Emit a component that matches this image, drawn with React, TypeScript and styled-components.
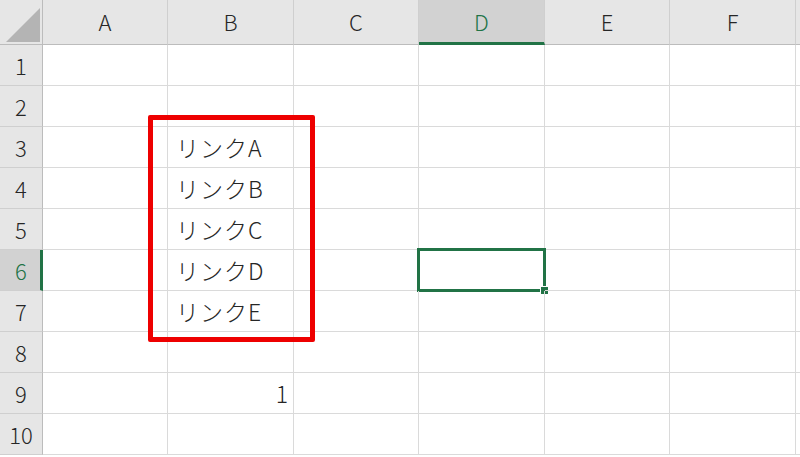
import React from 'react';
import styled, { createGlobalStyle, css } from 'styled-components';

const GlobalStyle = createGlobalStyle`
  html, body {
    margin: 0;
    padding: 0;
    background: #ffffff;
    overflow: hidden;
  }
  body {
    font-family: "Noto Sans CJK JP", "Noto Sans", sans-serif;
  }
`;

const COLS = ['A', 'B', 'C', 'D', 'E', 'F', 'G'];
const COL_WIDTHS = [125, 126, 125, 126, 125, 126, 60];
const ROW_COUNT = 10;
const ACTIVE_COL = 'D';
const ACTIVE_ROW = 6;
const GREEN = '#217346';

const cellValues: Record<string, { text: string; align?: 'left' | 'right' }> = {
  B3: { text: 'リンクA' },
  B4: { text: 'リンクB' },
  B5: { text: 'リンクC' },
  B6: { text: 'リンクD' },
  B7: { text: 'リンクE' },
  B9: { text: '1', align: 'right' },
};

const Sheet = styled.div`
  position: relative;
  display: grid;
  grid-template-columns: 43px ${COL_WIDTHS.map((w) => `${w}px`).join(' ')};
  grid-template-rows: 45px repeat(${ROW_COUNT}, 41px);
  width: 800px;
  height: 457px;
  overflow: hidden;
  color: #262626;
  font-weight: 300;
`;

const Corner = styled.div`
  background: #e6e6e6;
  border-right: 1px solid #bcbcbc;
  border-bottom: 1px solid #bcbcbc;
  box-sizing: border-box;
  display: flex;
  align-items: flex-end;
  justify-content: flex-end;
  padding: 0 2px 2px 0;
`;

const ColHeader = styled.div<{ $active?: boolean }>`
  box-sizing: border-box;
  background: #e6e6e6;
  border-right: 1px solid #cfcfcf;
  border-bottom: 1px solid #bcbcbc;
  display: flex;
  align-items: center;
  justify-content: center;
  font-size: 22px;
  padding-bottom: 2px;
  ${(p) =>
    p.$active &&
    css`
      background: #d2d2d2;
      color: ${GREEN};
      border-bottom: 3px solid ${GREEN};
      padding-bottom: 0;
    `}
`;

const RowHeader = styled.div<{ $active?: boolean }>`
  box-sizing: border-box;
  background: #e6e6e6;
  border-right: 1px solid #bcbcbc;
  border-bottom: 1px solid #cfcfcf;
  display: flex;
  align-items: center;
  justify-content: center;
  font-size: 22px;
  ${(p) =>
    p.$active &&
    css`
      background: #d2d2d2;
      color: ${GREEN};
      border-right: 3px solid ${GREEN};
      padding-left: 2px;
    `}
`;

const Cell = styled.div<{ $align?: 'left' | 'right' }>`
  position: relative;
  box-sizing: border-box;
  border-right: 1px solid #dadada;
  border-bottom: 1px solid #dadada;
  display: flex;
  align-items: center;
  justify-content: ${(p) => (p.$align === 'right' ? 'flex-end' : 'flex-start')};
  padding: 0 5px 0 8px;
  font-size: 23px;
  white-space: nowrap;
  letter-spacing: ${(p) => (p.$align === 'right' ? '0' : '1px')};
`;

const Selection = styled.div`
  position: absolute;
  left: -2px;
  top: -2px;
  right: -2px;
  bottom: -2px;
  border: 3px solid ${GREEN};
  pointer-events: none;
`;

const FillHandle = styled.div`
  position: absolute;
  right: -5px;
  bottom: -5px;
  width: 7px;
  height: 7px;
  background: ${GREEN};
  border-top: 1px solid #ffffff;
  border-left: 1px solid #ffffff;
`;

const Highlight = styled.div`
  position: absolute;
  left: 148px;
  top: 115px;
  width: 167px;
  height: 227px;
  box-sizing: border-box;
  border: 5px solid #ee0000;
  border-radius: 2px;
  pointer-events: none;
`;

const CornerTriangle = () => (
  <svg width="34" height="34" viewBox="0 0 34 34">
    <polygon points="0,34 34,34 34,0" fill="#b4b4b4" />
  </svg>
);

export default function App() {
  const rows = Array.from({ length: ROW_COUNT }, (_, i) => i + 1);
  return (
    <>
      <GlobalStyle />
      <Sheet>
        <Corner>
          <CornerTriangle />
        </Corner>
        {COLS.map((c) => (
          <ColHeader key={c} $active={c === ACTIVE_COL}>
            {c === 'G' ? '' : c}
          </ColHeader>
        ))}
        {rows.map((r) => (
          <React.Fragment key={r}>
            <RowHeader $active={r === ACTIVE_ROW}>{r}</RowHeader>
            {COLS.map((c) => {
              const v = cellValues[`${c}${r}`];
              const active = c === ACTIVE_COL && r === ACTIVE_ROW;
              return (
                <Cell key={c} $align={v?.align}>
                  {v?.text}
                  {active && (
                    <Selection>
                      <FillHandle />
                    </Selection>
                  )}
                </Cell>
              );
            })}
          </React.Fragment>
        ))}
        <Highlight />
      </Sheet>
    </>
  );
}
